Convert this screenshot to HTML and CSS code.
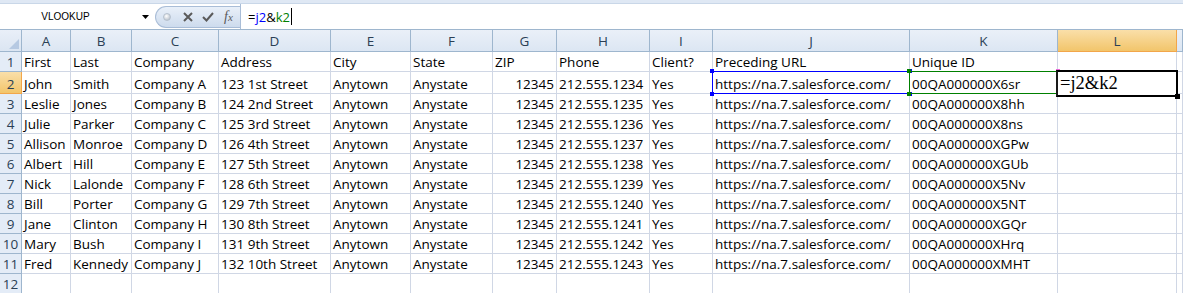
FILE: index.html
```html
<!DOCTYPE html>
<html>
<head>
<meta charset="utf-8">
<link rel="stylesheet" href="styles.css">
</head>
<body>
<div class="strip"></div>
<div class="fbar">
  <div class="namebox">
    <span class="nb-text">VLOOKUP</span>
    <svg class="nb-arrow" width="7" height="4" viewBox="0 0 7 4"><path d="M0 0H7L3.5 4Z" fill="#000"/></svg>
  </div>
  <div class="pill">
    <span class="slot"><span class="dot"></span></span>
    <span class="slot"><svg width="10" height="10" viewBox="0 0 10 10"><path d="M1 1L9 9M9 1L1 9" stroke="#5a5a5a" stroke-width="2"/></svg></span>
    <span class="slot"><svg width="12" height="10" viewBox="0 0 12 10"><path d="M1 5L4.5 8.5L11 1" stroke="#5a5a5a" stroke-width="2" fill="none"/></svg></span>
    <span class="slot"><span class="fx">f<span class="fx-x">x</span></span></span>
  </div>
  <div class="formula"><span>=</span><span class="rj">j2</span><span>&amp;</span><span class="rk">k2</span><span class="caret"></span></div>
</div>
<div class="sheet">
  <div class="corner"><svg width="10" height="10" viewBox="0 0 10 10"><path d="M10 0V10H0Z" fill="#b6c9e2"/></svg></div>
  <div class="ch">A</div><div class="ch">B</div><div class="ch">C</div><div class="ch">D</div><div class="ch">E</div><div class="ch">F</div><div class="ch">G</div><div class="ch">H</div><div class="ch">I</div><div class="ch">J</div><div class="ch">K</div><div class="ch sel">L</div><div class="ch"></div>

  <div class="rh">1</div><div class="c">First</div><div class="c">Last</div><div class="c">Company</div><div class="c">Address</div><div class="c">City</div><div class="c">State</div><div class="c">ZIP</div><div class="c">Phone</div><div class="c">Client?</div><div class="c">Preceding URL</div><div class="c">Unique ID</div><div class="c"></div><div class="c"></div>

  <div class="rh sel">2</div><div class="c">John</div><div class="c">Smith</div><div class="c">Company A</div><div class="c">123 1st Street</div><div class="c">Anytown</div><div class="c">Anystate</div><div class="c n">12345</div><div class="c">212.555.1234</div><div class="c">Yes</div><div class="c ov">https://na.7.salesforce.com/<span class="rng rng-j"><i class="h tl"></i><i class="h tr"></i><i class="h bl"></i><i class="h br"></i></span></div><div class="c ov">00QA000000X6sr<span class="rng rng-k"><i class="h tl"></i><i class="h tr"></i><i class="h bl"></i><i class="h br"></i></span></div><div class="c ov"><span class="editor">=j2&amp;k2<i class="hd"></i></span></div><div class="c"></div>

  <div class="rh">3</div><div class="c">Leslie</div><div class="c">Jones</div><div class="c">Company B</div><div class="c">124 2nd Street</div><div class="c">Anytown</div><div class="c">Anystate</div><div class="c n">12345</div><div class="c">212.555.1235</div><div class="c">Yes</div><div class="c">https://na.7.salesforce.com/</div><div class="c">00QA000000X8hh</div><div class="c"></div><div class="c"></div>

  <div class="rh">4</div><div class="c">Julie</div><div class="c">Parker</div><div class="c">Company C</div><div class="c">125 3rd Street</div><div class="c">Anytown</div><div class="c">Anystate</div><div class="c n">12345</div><div class="c">212.555.1236</div><div class="c">Yes</div><div class="c">https://na.7.salesforce.com/</div><div class="c">00QA000000X8ns</div><div class="c"></div><div class="c"></div>

  <div class="rh">5</div><div class="c">Allison</div><div class="c">Monroe</div><div class="c">Company D</div><div class="c">126 4th Street</div><div class="c">Anytown</div><div class="c">Anystate</div><div class="c n">12345</div><div class="c">212.555.1237</div><div class="c">Yes</div><div class="c">https://na.7.salesforce.com/</div><div class="c">00QA000000XGPw</div><div class="c"></div><div class="c"></div>

  <div class="rh">6</div><div class="c">Albert</div><div class="c">Hill</div><div class="c">Company E</div><div class="c">127 5th Street</div><div class="c">Anytown</div><div class="c">Anystate</div><div class="c n">12345</div><div class="c">212.555.1238</div><div class="c">Yes</div><div class="c">https://na.7.salesforce.com/</div><div class="c">00QA000000XGUb</div><div class="c"></div><div class="c"></div>

  <div class="rh">7</div><div class="c">Nick</div><div class="c">Lalonde</div><div class="c">Company F</div><div class="c">128 6th Street</div><div class="c">Anytown</div><div class="c">Anystate</div><div class="c n">12345</div><div class="c">212.555.1239</div><div class="c">Yes</div><div class="c">https://na.7.salesforce.com/</div><div class="c">00QA000000X5Nv</div><div class="c"></div><div class="c"></div>

  <div class="rh">8</div><div class="c">Bill</div><div class="c">Porter</div><div class="c">Company G</div><div class="c">129 7th Street</div><div class="c">Anytown</div><div class="c">Anystate</div><div class="c n">12345</div><div class="c">212.555.1240</div><div class="c">Yes</div><div class="c">https://na.7.salesforce.com/</div><div class="c">00QA000000X5NT</div><div class="c"></div><div class="c"></div>

  <div class="rh">9</div><div class="c">Jane</div><div class="c">Clinton</div><div class="c">Company H</div><div class="c">130 8th Street</div><div class="c">Anytown</div><div class="c">Anystate</div><div class="c n">12345</div><div class="c">212.555.1241</div><div class="c">Yes</div><div class="c">https://na.7.salesforce.com/</div><div class="c">00QA000000XGQr</div><div class="c"></div><div class="c"></div>

  <div class="rh">10</div><div class="c">Mary</div><div class="c">Bush</div><div class="c">Company I</div><div class="c">131 9th Street</div><div class="c">Anytown</div><div class="c">Anystate</div><div class="c n">12345</div><div class="c">212.555.1242</div><div class="c">Yes</div><div class="c">https://na.7.salesforce.com/</div><div class="c">00QA000000XHrq</div><div class="c"></div><div class="c"></div>

  <div class="rh">11</div><div class="c">Fred</div><div class="c">Kennedy</div><div class="c">Company J</div><div class="c">132 10th Street</div><div class="c">Anytown</div><div class="c">Anystate</div><div class="c n">12345</div><div class="c">212.555.1243</div><div class="c">Yes</div><div class="c">https://na.7.salesforce.com/</div><div class="c">00QA000000XMHT</div><div class="c"></div><div class="c"></div>

  <div class="rh">12</div><div class="c"></div><div class="c"></div><div class="c"></div><div class="c"></div><div class="c"></div><div class="c"></div><div class="c"></div><div class="c"></div><div class="c"></div><div class="c"></div><div class="c"></div><div class="c"></div><div class="c"></div>
</div>
</body>
</html>
```
FILE: styles.css
```css
html, body {
  margin: 0;
  padding: 0;
}
body {
  width: 1183px;
  height: 293px;
  overflow: hidden;
  background: #fff;
  font-family: "Open Sans", "DejaVu Sans", sans-serif;
}

.strip {
  height: 3px;
  background: #dfe8f4;
  border-bottom: 1px solid #c9d7e8;
}

.fbar {
  height: 25px;
  display: flex;
  align-items: stretch;
  border-bottom: 1px solid #9eb6ce;
  background: #fff;
}

.namebox {
  width: 155px;
  display: flex;
  align-items: center;
  flex: none;
}
.nb-text {
  width: 131px;
  text-align: center;
  font-family: "Liberation Sans", sans-serif;
  font-size: 10px;
  color: #000;
}
.nb-arrow {
  margin-left: 11px;
}

.pill {
  flex: none;
  width: 85px;
  height: 22px;
  margin-top: 2px;
  box-sizing: border-box;
  border: 1px solid #a9bdd7;
  border-right: none;
  border-radius: 11px 0 0 11px;
  background: linear-gradient(#e9f0f9, #cddbed);
  display: grid;
  grid-template-columns: 21px 21px 20px 21px;
  align-items: center;
}
.slot {
  display: flex;
  justify-content: center;
  align-items: center;
}
.dot {
  width: 8px;
  height: 8px;
  border-radius: 50%;
  background: radial-gradient(circle at 40% 35%, #ffffff, #a9b3bf);
  border: 1px solid #b5c0cd;
  box-sizing: border-box;
}
.fx {
  font-family: "Liberation Serif", serif;
  font-style: italic;
  font-size: 14px;
  color: #5a5a5a;
  line-height: 14px;
}
.fx-x {
  font-size: 11px;
}

.formula {
  flex: 1;
  border-left: 1px solid #a9bdd7;
  display: flex;
  align-items: center;
  padding-left: 7px;
  font-family: "Open Sans", sans-serif;
  font-size: 13px;
  color: #000;
}
.rj { color: #0000ff; }
.rk { color: #008000; }
.caret {
  width: 1px;
  height: 17px;
  background: #000;
  margin-left: 1px;
}

.sheet {
  display: grid;
  grid-template-columns: 22px 49px 61px 87px 112px 80px 82px 64px 93px 63px 197px 148px 119px 1fr;
  grid-template-rows: 22px 20px 22px repeat(10, 20px);
}

.corner {
  background: linear-gradient(#e9eff8, #dbe5f2);
  border-right: 1px solid #9eb6ce;
  border-bottom: 1px solid #9eb6ce;
  box-sizing: border-box;
  display: flex;
  justify-content: flex-end;
  align-items: flex-end;
  padding: 0 2px 2px 0;
}

.ch, .rh {
  box-sizing: border-box;
  background: linear-gradient(#eaf0f8, #dce6f3);
  border-right: 1px solid #9eb6ce;
  border-bottom: 1px solid #9eb6ce;
  display: flex;
  justify-content: center;
  align-items: center;
  font-size: 13.5px;
  color: #2b3f55;
}
.rh {
  align-items: flex-end;
  line-height: 16px;
  padding-bottom: 1px;
  background: #e4ecf7;
}
.ch.sel, .rh.sel {
  background: linear-gradient(#fadfa9, #f2c56b);
  border-color: #f2a64a;
}

.c {
  position: relative;
  box-sizing: border-box;
  border-right: 1px solid #d0d7e5;
  border-bottom: 1px solid #d0d7e5;
  font-size: 13.5px;
  line-height: 16px;
  padding: 0 2px 1px 2px;
  display: flex;
  align-items: flex-end;
  white-space: nowrap;
  overflow: hidden;
  color: #000;
}
.c.n {
  justify-content: flex-end;
}
.c.ov {
  overflow: visible;
}

.rng {
  position: absolute;
  left: -1px;
  top: -1px;
  right: -1px;
  bottom: -1px;
  border: 1px solid;
  z-index: 1;
}
.rng-j { border-color: #0000ff; }
.rng-k { border-color: #008000; z-index: 2; }
.h {
  position: absolute;
  width: 4px;
  height: 4px;
}
.rng-j .h { background: #0000ff; }
.rng-k .h { background: #008000; }
.h.tl { left: -3px; top: -3px; }
.h.tr { right: -3px; top: -3px; }
.h.bl { left: -3px; bottom: -3px; }
.h.br { right: -3px; bottom: -3px; }
.rng-k .h.tr, .rng-k .h.br { background: #e86cd8; }

.editor {
  position: absolute;
  left: -2px;
  top: -2px;
  right: -2px;
  bottom: -4px;
  border: 2px solid #000;
  border-left-color: #1a1a1a;
  background: #fff;
  z-index: 3;
  font-family: "Liberation Serif", serif;
  font-size: 18.5px;
  line-height: 23px;
  padding-left: 2px;
  color: #000;
}
.hd {
  position: absolute;
  right: -4px;
  bottom: -4px;
  width: 5px;
  height: 5px;
  background: #000;
}
```
